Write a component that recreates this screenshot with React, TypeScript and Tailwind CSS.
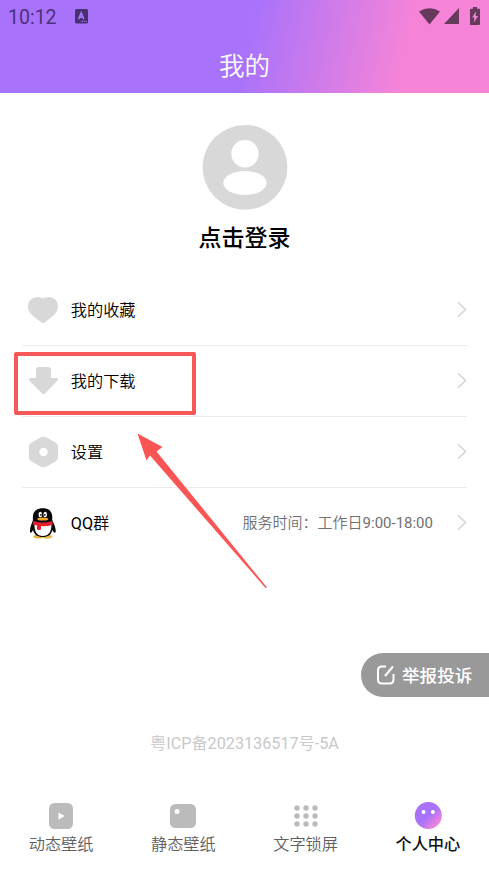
import type { ReactNode } from "react";

function StatusBar() {
  return (
    <div className="flex h-8 items-center pt-[3px] pl-[8px] pr-[9px]">
      <span className="w-[49px] text-[19.500px] font-normal leading-8 text-[#4c317c]">10:12</span>
      <svg className="ml-[18px] -mt-0.5" width="13" height="15" viewBox="0 0 13 15">
        <rect width="13" height="14.5" rx="1.5" fill="#48306f" />
        <path d="M3.6 10.2 6.2 4l2.6 6.2M4.6 8.2h3.2" fill="none" stroke="#a872fb" strokeWidth="1.7" />
        <path d="M6 12.4h6" stroke="#a872fb" strokeWidth="0.9" strokeDasharray="2 0.6" />
      </svg>
      <div className="ml-auto -mt-[3px] flex items-center">
        <svg width="21" height="17" viewBox="0 0 21 17">
          <path d="M0 3.6Q10.500-3 21 3.600L10.500 16.500Z" fill="#673a5c" />
        </svg>
        <svg className="ml-1" width="15" height="16" viewBox="0 0 15 16">
          <path d="M15 0v16H0z" fill="#673a5c" />
        </svg>
        <svg className="ml-[11px]" width="10" height="18" viewBox="0 0 10 18">
          <path d="M3 0h4v1.800h2q1 0 1 1V17q0 1-1 1H1q-1 0-1-1V2.800q0-1 1-1h2z" fill="#673a5c" />
          <path d="M5.800 4.500 2.200 10.500h2.200L3.800 15.500 8 9H5.700z" fill="#f584d8" />
        </svg>
      </div>
    </div>
  );
}

function HeartIcon() {
  return (
    <svg width="30" height="26" viewBox="0 0 30 26" fill="#d8d8d8">
      <path d="M15 1.500Q13 0 9 0 0 1 0 9.500 0 14 4 18L13 25.200Q15 26.600 17 25.200L26 18Q30 14 30 9.500 30 1 21 0 17 0 15 1.500Z" />
    </svg>
  );
}

function DownloadIcon() {
  return (
    <svg width="29" height="28" viewBox="0 0 29 28" fill="#d8d8d8">
      <path d="M10 0h9q3 0 3 3v8h5q3.500 0 1 3L16 26.500q-1.500 1.500-3 0L.7 14Q-1.500 11 2 11h5V3q0-3 3-3Z" />
    </svg>
  );
}

function SettingsIcon() {
  return (
    <svg width="29" height="32" viewBox="0 0 29 32">
      <path d="M12 1.200q2.500-1.600 5 0L26.500 6.500Q29 8 29 10.500v11q0 2.500-2.500 4L17 30.800q-2.500 1.600-5 0L2.500 25.500Q0 24 0 21.500v-11Q0 8 2.500 6.500Z" fill="#d8d8d8" />
      <circle cx="14.500" cy="16" r="4.200" fill="#fff" />
    </svg>
  );
}

function PenguinIcon() {
  return (
    <svg width="26" height="31" viewBox="0 0 26 31">
      <ellipse cx="8.500" cy="28.600" rx="5.500" ry="2" fill="#eab744" />
      <ellipse cx="17" cy="28.600" rx="5.500" ry="2" fill="#eab744" />
      <path d="M3 12C2 4 6 .3 12.800.3S23 4 22.200 12C24 16 26 20 25.700 23.500 25 26.500 23 23.500 22.400 22 21 27 18 29 12.800 29S4.500 27 3 22C2 24.500.5 26 0 23.500-.2 20 1.500 16 3 12Z" fill="#080808" />
      <path d="M4.500 16h17q0 12-8.700 12T4.500 16Z" fill="#fff" />
      <ellipse cx="10.300" cy="6.500" rx="1.800" ry="2.700" fill="#fff" />
      <ellipse cx="15.200" cy="6.500" rx="1.800" ry="2.700" fill="#fff" />
      <circle cx="10.900" cy="6.800" r=".9" />
      <circle cx="14.700" cy="6.800" r=".9" />
      <ellipse cx="12.800" cy="10.900" rx="5.500" ry="1.500" fill="#f5a623" />
      <path d="M3.300 13Q12.800 16 22.300 13L22.800 16.700Q16 18.800 11 18v3.600q-2 .8-4 0V17.500L2.800 16.500Z" fill="#e51f2d" />
    </svg>
  );
}

// Latin runs sit at regular weight beside the lighter Chinese glyphs.
function Latin({ children }: { children: ReactNode }) {
  return <span className="font-normal">{children}</span>;
}

function Row({ icon, label, note, last }: { icon: ReactNode; label: ReactNode; note?: ReactNode; last?: boolean }) {
  return (
    <div className={`flex h-[71px] items-center border-b ${last ? "border-transparent" : "border-[#ebebeb]"}`}>
      <div className="flex w-[42.500px] items-center justify-center">{icon}</div>
      <span className="ml-[6.300px] pt-0.5 text-[16.200px] text-black">{label}</span>
      {note && <span className="ml-auto text-[15px] text-[#707070]">{note}</span>}
      <svg className={note ? "ml-6" : "ml-auto"} width="10" height="16" viewBox="0 0 10 16" fill="none" stroke="#d4d4d4" strokeWidth="1.500">
        <path d="M1 .3 8.500 7.500 1 14.700" />
      </svg>
    </div>
  );
}

function Tab({ icon, label, active }: { icon: ReactNode; label: string; active?: boolean }) {
  return (
    <div className="flex flex-1 flex-col items-center">
      <div className="flex h-[28px] items-center">{icon}</div>
      <span className={`mt-[3px] text-[16.200px] leading-6 ${active ? "font-medium text-[#111]" : "text-[#606060]"}`}>{label}</span>
    </div>
  );
}

export default function App() {
  return (
    <div className="relative flex h-[871px] w-[489px] flex-col overflow-hidden bg-white font-[Roboto,'Noto_Sans_CJK_SC',sans-serif] font-[350]">
      <header className="h-[92.500px] bg-[linear-gradient(102deg,#a872fb_50%,#f584d8_82%)]">
        <StatusBar />
        <h1 className="mt-[16px] text-center text-[25.500px] leading-9 text-white">我的</h1>
      </header>

      <section className="flex h-[182.500px] flex-col items-center pt-[31.500px]">
        <svg width="86" height="86" viewBox="0 0 86 86">
          <circle cx="43" cy="43.300" r="42.400" fill="#d8d8d8" />
          <circle cx="43" cy="29.800" r="13.700" fill="#fff" />
          <ellipse cx="43" cy="59" rx="21.700" ry="12" fill="#fff" />
        </svg>
        <span className="mt-[10.500px] text-[23px] font-medium leading-9 text-black">点击登录</span>
      </section>

      <main className="px-[22px]">
        <Row icon={<HeartIcon />} label="我的收藏" />
        <Row icon={<DownloadIcon />} label="我的下载" />
        <Row icon={<SettingsIcon />} label="设置" />
        <Row
          icon={<PenguinIcon />}
          label={<><Latin>QQ</Latin>群</>}
          note={<>服务时间：工作日<Latin>9:00-18:00</Latin></>}
          last
        />
      </main>

      <button className="mt-[94px] flex h-11 w-32 items-center self-end rounded-l-full bg-[#999] pl-4 text-white">
        <svg width="18" height="20" viewBox="0 0 18 20" fill="none" stroke="#fff" strokeWidth="2">
          <path d="M9 1.500H5Q1 1.500 1 5.500v9q0 4 4 4h7.500q4 0 4-4V9M8 11l8-9.500" />
        </svg>
        <span className="ml-[7px] pt-0.5 text-[17.600px] font-medium">举报投诉</span>
      </button>

      <p className="mt-[35px] text-center text-[16.200px] leading-6 text-[#c8c8c8]">
        粤<Latin>ICP</Latin>备<Latin>2023136517</Latin>号<Latin>-5A</Latin>
      </p>

      <nav className="mt-[46px] flex">
        <Tab
          label="动态壁纸"
          icon={
            <svg width="24" height="26" viewBox="0 0 24 26">
              <rect width="24" height="26" rx="5.500" fill="#bbb" />
              <path d="M10 10.500v5.200l4.600-2.600z" fill="#fff" stroke="#fff" strokeWidth="1.200" strokeLinejoin="round" />
            </svg>
          }
        />
        <Tab
          label="静态壁纸"
          icon={
            <svg width="26" height="24" viewBox="0 0 26 24">
              <rect width="26" height="24" rx="5.500" fill="#bbb" />
              <circle cx="7" cy="7.500" r="2.500" fill="#fff" />
            </svg>
          }
        />
        <Tab
          label="文字锁屏"
          icon={
            <svg width="24" height="22" viewBox="0 0 24 22" fill="#bbb">
              {[3, 12, 21].map((x) => [3, 11, 19].map((y) => <circle key={`${x}-${y}`} cx={x} cy={y} r="2.700" />))}
            </svg>
          }
        />
        <Tab
          active
          label="个人中心"
          icon={
            <svg width="28" height="28" viewBox="0 0 28 28">
              <defs>
                <linearGradient id="face" x1="0" y1="0" x2="1" y2="1">
                  <stop offset=".5" stopColor="#a872fb" />
                  <stop offset=".85" stopColor="#f584d8" />
                </linearGradient>
              </defs>
              <circle cx="14.300" cy="13.500" r="13.500" fill="url(#face)" />
              <circle cx="9.600" cy="10" r="2" fill="#fff" />
              <circle cx="18.900" cy="10" r="2" fill="#fff" />
            </svg>
          }
        />
      </nav>

      <div className="absolute left-[14px] top-[352px] h-[63px] w-[182px] rounded-[2px] border-4 border-[#f65757]" />
      <svg className="absolute left-[130px] top-[425px]" width="150" height="170" viewBox="130 425 150 170">
        <path d="M137.500 433.500 162.500 447 156.500 451.500 267 587.500 265.500 588 150 455.500 146.500 460.500Z" fill="#fa5555" />
      </svg>
    </div>
  );
}
